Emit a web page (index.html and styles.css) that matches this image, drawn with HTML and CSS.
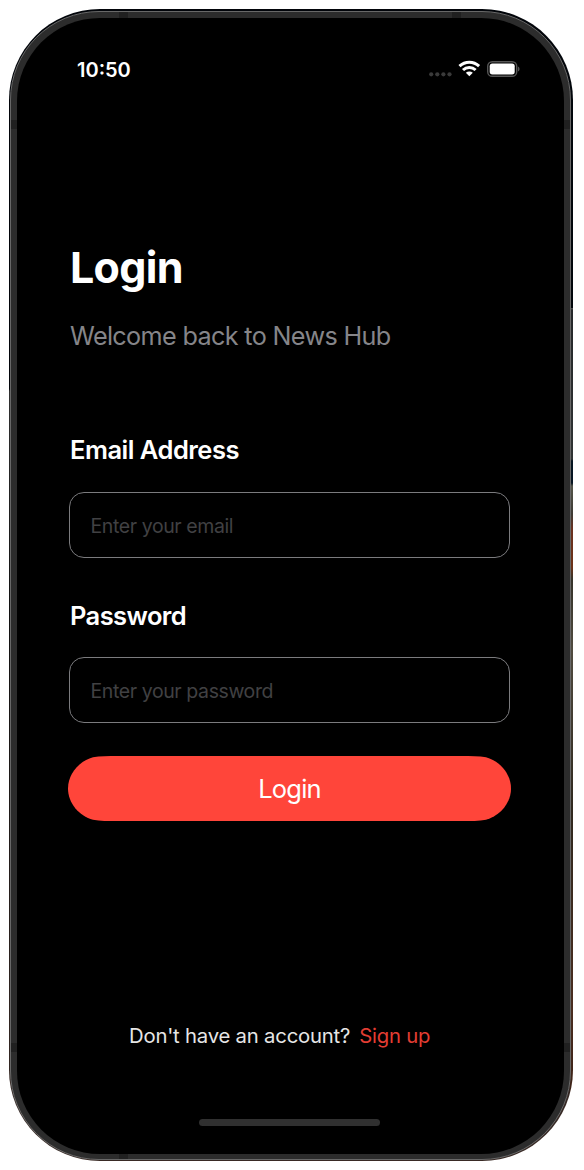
FILE: index.html
```html
<!DOCTYPE html>
<html lang="en">
<head>
<meta charset="utf-8">
<title>News Hub Login</title>
<link rel="stylesheet" href="styles.css">
</head>
<body>
<div class="device">
  <div class="frame">
    <i class="band band-tl"></i><i class="band band-tr"></i>
    <i class="band band-lt"></i><i class="band band-rt"></i>
    <i class="band band-lb"></i><i class="band band-rb"></i>
    <i class="band band-bl"></i>
    <main class="screen">
      <header class="status">
        <span class="time">10:50</span>
        <svg class="indicators" width="92" height="18" viewBox="0 0 92 18">
          <g fill="#3a3a3a"><circle cx="3.2" cy="14.3" r="2.1"/><circle cx="9.3" cy="14.3" r="2.1"/><circle cx="15.4" cy="14.3" r="2.1"/><circle cx="21.5" cy="14.3" r="2.1"/></g>
          <g fill="none" stroke="#fff" stroke-width="3"><path d="M31.5 6.2C37.1.9 45.5.9 51.1 6.2"/><path d="M35 10C38.6 6.5 44 6.5 47.6 10"/></g>
          <path d="M41.3 16.2 37.8 12.7C39.8 11 42.8 11 44.8 12.7Z" fill="#fff"/>
          <rect x="59.7" y="1.7" width="29" height="14.6" rx="4.6" fill="none" stroke="#565656" stroke-width="1.4"/>
          <rect x="61.7" y="3.6" width="25" height="10.8" rx="2.6" fill="#fff"/>
          <path d="M90 6.6Q91.6 7.2 91.6 9T90 11.4Z" fill="#555"/>
        </svg>
      </header>
      <h1 class="title">Login</h1>
      <p class="subtitle">Welcome back to News Hub</p>
      <form class="form">
        <label class="label" for="email">Email Address</label>
        <input class="input" id="email" type="email" placeholder="Enter your email">
        <label class="label label-password" for="password">Password</label>
        <input class="input input-password" id="password" type="password" placeholder="Enter your password">
        <button class="submit" type="button"><span>Login</span></button>
      </form>
      <p class="signup"><span class="question">Don't have an account?</span><a class="link">Sign up</a></p>
      <div class="home"></div>
    </main>
  </div>
</div>
</body>
</html>
```
FILE: styles.css
```css
* { box-sizing: border-box; }
body { margin: 0; padding: 9px; background: #fff; font-family: Inter, "Liberation Sans", sans-serif; color: #fff; }
h1, p { margin: 0; font-weight: 400; }
.device {
  width: 564px; height: 1152px; padding: 2px 2px 1px 1px; border-radius: 91px;
  background:
    linear-gradient(#02060b 299px, #575757 299px, #25282a 301px, #303334 450px, #061522 452px, #061522 474px, #555549 477px, #3d3b35 505px, #6a3120 520px, #6c3218 558px, #35332a 570px, #504b40 640px, #30291f 800px, #4a2d20 1000px, #311a10 1152px) right / 3px 100% no-repeat,
    linear-gradient(#02050a 380px, #303030 382px, #111 600px, #392a25 1152px);
}
.frame { position: relative; height: 1149px; border: 1px solid #686868; border-radius: 89px; background: #2c2c2c; padding: 6px 6px 5px 6px; }
.screen { position: relative; height: 1136px; border-radius: 83px; background: #000; padding: 42px 49px 0 53px; display: flex; flex-direction: column; }
.band { position: absolute; background: #202020; }
.band-tl, .band-tr, .band-bl { width: 9px; height: 6px; }
.band-tl { left: 108px; top: 0; }
.band-tr { right: 109px; top: 0; }
.band-bl { left: 108px; bottom: 0; }
.band-lt, .band-lb, .band-rt, .band-rb { width: 6px; height: 9px; }
.band-lt { left: 0; top: 108px; }
.band-lb { left: 0; bottom: 107px; }
.band-rt { right: 0; top: 108px; }
.band-rb { right: 0; bottom: 107px; }
.status { display: flex; justify-content: space-between; align-items: center; height: 20px; margin: 0 -5px 0 7px; }
.indicators { margin-top: -2px; }
.time { font-size: 20px; font-weight: 600; line-height: 20px; }
.title { margin-top: 159px; font-size: 43px; font-weight: 700; line-height: 56px; letter-spacing: -.7px; }
.subtitle { margin-top: 24px; font-size: 25.2px; line-height: 34px; letter-spacing: -.65px; color: #858589; }
.form { display: flex; flex-direction: column; margin: 82px 0 0 -1px; }
.label { margin-left: 1px; font-size: 25.5px; font-weight: 600; line-height: 30px; letter-spacing: -.5px; }
.input { width: 441px; height: 66px; margin-top: 27px; padding: 2px 21px 0 20.5px; border: 1.5px solid #7b7b7e; border-radius: 15px; background: #000; color: #fff; font: 19.5px Inter, "Liberation Sans", sans-serif; letter-spacing: -.4px; outline: 0; }
.input::placeholder { color: #414143; opacity: 1; }
.label-password { margin-top: 43px; letter-spacing: -.6px; }
.input-password { margin-top: 26px; }
.submit {
  width: 443px; height: 65px; margin: 33px 0 0 -1px; padding: 0; border: 0; background: #ff453a; color: #fff;
  font: 25.5px Inter, "Liberation Sans", sans-serif; letter-spacing: -.8px;
  clip-path: path("M0 32.5C0 18 11 5 25 1.3C32 0 40 0 50 0H393C403 0 411 0 418 1.3C432 5 443 18 443 32.5C443 47 432 60 418 63.7C411 65 403 65 393 65H50C40 65 32 65 25 63.7C11 60 0 47 0 32.5Z");
}
.signup { display: flex; gap: 9px; margin: 201px 0 0 59px; font-size: 20.3px; line-height: 28px; letter-spacing: -.2px; white-space: nowrap; color: #e6e6e6; }
.link { color: #e33d33; }
.home { width: 181px; height: 7px; margin: 69px 0 0 129px; border-radius: 4px; background: #303030; }
```
